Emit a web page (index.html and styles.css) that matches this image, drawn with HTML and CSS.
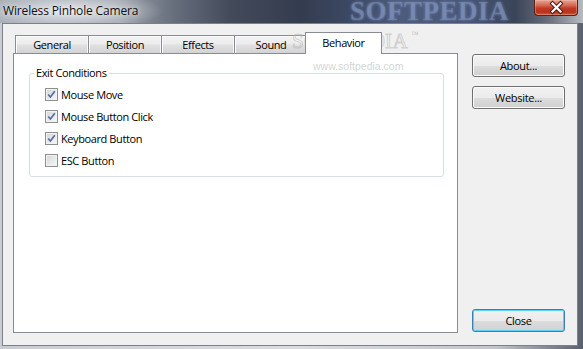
FILE: index.html
```html
<!DOCTYPE html>
<html>
<head>
<meta charset="utf-8">
<link rel="stylesheet" href="styles.css">
</head>
<body>
<div class="window">
  <div class="titlebar">
    <span class="title">Wireless Pinhole Camera</span>
    <span class="wm-title">SOFTPEDIA</span>
    <div class="close-btn">
      <svg width="43" height="15" viewBox="0 0 43 15">
        <path d="M17.5 3.5 L25.5 11.5 M25.5 3.5 L17.5 11.5" stroke="#4a1c16" stroke-width="4.2" stroke-linecap="square" fill="none"/>
        <path d="M17.5 3.5 L25.5 11.5 M25.5 3.5 L17.5 11.5" stroke="#ffffff" stroke-width="2.2" stroke-linecap="square" fill="none"/>
      </svg>
    </div>
  </div>
  <div class="client">
    <div class="tabctl">
      <div class="tabstrip">
        <div class="tab">General</div>
        <div class="tab">Position</div>
        <div class="tab">Effects</div>
        <div class="tab">Sound</div>
        <div class="tab selected">Behavior</div>
      </div>
      <div class="panel">
        <fieldset class="group">
          <legend>Exit Conditions</legend>
          <div class="items">
            <div class="row"><span class="cb"><svg width="11" height="11" viewBox="0 0 11 11"><path d="M2.2 5.4 L4.4 8 L8.8 2.2" stroke="#55699b" stroke-width="1.6" fill="none"/></svg></span>Mouse Move</div>
            <div class="row"><span class="cb"><svg width="11" height="11" viewBox="0 0 11 11"><path d="M2.2 5.4 L4.4 8 L8.8 2.2" stroke="#55699b" stroke-width="1.6" fill="none"/></svg></span>Mouse Button Click</div>
            <div class="row"><span class="cb"><svg width="11" height="11" viewBox="0 0 11 11"><path d="M2.2 5.4 L4.4 8 L8.8 2.2" stroke="#55699b" stroke-width="1.6" fill="none"/></svg></span>Keyboard Button</div>
            <div class="row"><span class="cb"></span>ESC Button</div>
          </div>
        </fieldset>
      </div>
    </div>
    <div class="side">
      <button class="btn">About...</button>
      <button class="btn btn-gap">Website...</button>
      <button class="btn btn-default">Close</button>
    </div>
  </div>
  <span class="wm-tab">SOFTPEDIA<span class="tm">™</span></span>
  <span class="wm-url">www.softpedia.com</span>
</div>
</body>
</html>
```

FILE: styles.css
```css
* { box-sizing: border-box; }

body {
  margin: 0;
  font-family: "Open Sans", "Noto Sans", sans-serif;
  font-size: 11px;
  letter-spacing: -0.4px;
  color: #000;
}

.window {
  position: relative;
  width: 583px;
  height: 349px;
  overflow: hidden;
  display: flex;
  flex-direction: column;
  background: linear-gradient(to right, #c9cdd3 0, #dadcdf 50%, #c2c6cc 85%, #59606e 100%);
}

.titlebar {
  position: relative;
  height: 23px;
  flex: none;
  display: flex;
  justify-content: space-between;
  align-items: flex-start;
  background:
    radial-gradient(ellipse 95px 20px at 68px 11px, rgba(232,235,239,0.95), rgba(232,235,239,0) 100%),
    linear-gradient(to right, #a4a9b2 0, #9ba1ab 120px, #666d7b 175px, #434a5a 230px, #343c4f 300px, #3b4762 345px, #4d5b7c 400px, #485677 470px, #3a4459 515px, #686e7a 548px, #b8bbc1 583px);
}

.title {
  padding: 3px 0 0 3px;
  font-size: 12px;
  line-height: 16px;
  letter-spacing: -0.15px;
  color: #101010;
  text-shadow: 0 0 5px rgba(255,255,255,0.9);
}

.wm-title {
  position: absolute;
  left: 350px;
  top: -4px;
  font-family: "Liberation Serif", serif;
  font-weight: bold;
  font-size: 27px;
  letter-spacing: 0.5px;
  color: rgba(135,155,200,0.45);
  text-shadow: 0 0 3px rgba(140,160,205,0.6);
}

.close-btn {
  position: relative;
  width: 44px;
  height: 16px;
  margin-right: 5px;
  border: 1px solid #5b2018;
  border-top: none;
  border-radius: 0 0 4px 4px;
  background: linear-gradient(#e4a597 0, #d46a55 35%, #c23a22 55%, #b8321c 80%, #cc5a3e 100%);
  box-shadow: inset 0 0 0 1px rgba(255,200,180,0.35);
}

.close-btn svg { display: block; }

.client {
  flex: 1;
  margin: 0 5px 3px 2px;
  border: 1px solid #7c8089;
  background: #f0f0f0;
  display: flex;
  padding: 8px 13px 12px 10px;
}

.tabctl {
  width: 445px;
  flex: none;
  display: flex;
  flex-direction: column;
}

.tabstrip {
  height: 21px;
  flex: none;
  display: flex;
  align-items: flex-end;
  padding-left: 2px;
}

.tab {
  width: 74px;
  height: 18px;
  margin-left: -1px;
  border: 1px solid #898c95;
  border-bottom: none;
  background: linear-gradient(#f3f3f3 0, #ececec 45%, #e0e0e0 55%, #d3d3d3 100%);
  box-shadow: inset 1px 1px 0 #fbfbfb, inset -1px 0 0 #f6f6f6;
  text-align: center;
  line-height: 17px;
  color: #000;
}

.tab:first-child { margin-left: 0; }

.tab.selected {
  position: relative;
  z-index: 1;
  width: 77px;
  height: 22px;
  margin-left: -3px;
  margin-bottom: -1px;
  background: #fff;
  box-shadow: none;
  line-height: 20px;
}

.panel {
  flex: 1;
  background: #fff;
  border: 1px solid #898c95;
  padding: 12px 13px 0 15px;
}

.group {
  margin: 0;
  padding: 0;
  border: 1px solid #d5dfe5;
  border-radius: 3px;
}

.group legend {
  margin-left: 4px;
  padding: 0 2px;
  line-height: 14px;
}

.items {
  padding: 3px 0 5px 15px;
}

.row {
  height: 22px;
  display: flex;
  align-items: center;
  gap: 3px;
}

.cb {
  width: 13px;
  height: 13px;
  flex: none;
  border: 1px solid #8e8f8f;
  background: linear-gradient(135deg, #d2d4d6 0, #eceef0 70%, #f7f7f7 100%);
  box-shadow: inset 0 0 0 1px #f2f2f2;
  display: flex;
  align-items: center;
  justify-content: center;
}

.cb svg { display: block; }

.side {
  width: 93px;
  flex: none;
  margin-left: 14px;
  display: flex;
  flex-direction: column;
  padding-top: 22px;
}

.btn {
  width: 93px;
  height: 23px;
  padding: 0;
  font-family: "Open Sans", "Noto Sans", sans-serif;
  font-size: 11px;
  letter-spacing: -0.3px;
  color: #000;
  border: 1px solid #707070;
  border-radius: 3px;
  background: linear-gradient(#f2f2f2 0, #ebebeb 50%, #dddddd 51%, #cfcfcf 100%);
  box-shadow: inset 0 0 0 1px #fbfbfb;
}

.btn-gap { margin-top: 9px; }

.btn-default {
  margin-top: auto;
  margin-bottom: 1px;
  border-color: #3c7fb1;
  box-shadow: inset 0 0 0 1px #5fd0f5;
  background: linear-gradient(#f1f1f1 0, #ebebeb 50%, #dcdcdc 51%, #d0d2d4 100%);
}

.wm-tab {
  position: absolute;
  left: 292px;
  top: 30px;
  font-family: "Liberation Serif", serif;
  font-size: 21px;
  letter-spacing: 0.3px;
  line-height: 22px;
  color: rgba(255,255,255,0.15);
  -webkit-text-stroke: 1px rgba(170,170,170,0.45);
  pointer-events: none;
}

.wm-tab .tm {
  font-size: 8px;
  vertical-align: top;
  margin-left: 3px;
  -webkit-text-stroke: 0;
  color: rgba(160,160,160,0.6);
  line-height: 10px;
}

.wm-url {
  position: absolute;
  left: 313px;
  top: 60px;
  font-family: "Liberation Sans", sans-serif;
  font-size: 10.5px;
  letter-spacing: 0;
  line-height: 12px;
  color: rgba(175,175,175,0.55);
  pointer-events: none;
}
```
